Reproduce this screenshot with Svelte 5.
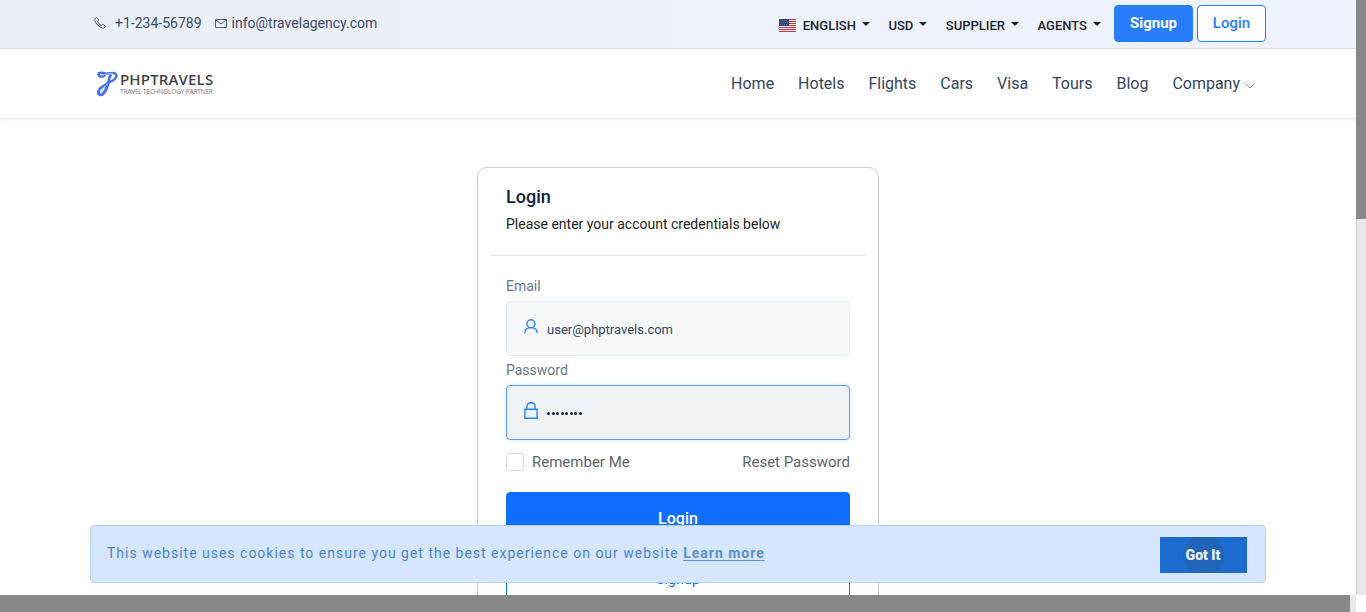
<script lang="ts">
  const menus = ['ENGLISH', 'USD', 'SUPPLIER', 'AGENTS'];
  const links = ['Home', 'Hotels', 'Flights', 'Cars', 'Visa', 'Tours', 'Blog', 'Company'];
  const stripes = [0, 2, 4, 6, 8, 10, 12];
</script>

<div class="window">
  <div class="main">
    <div class="page">
      <header class="topbar">
        <div class="contact">
          <svg class="phone" width="12" height="12" viewBox="0 0 12 12" fill="none" stroke="#4b5b76" stroke-width="1">
            <path d="M2.3.7.8 2.1C.4 3.9 2.2 6.7 3.8 8.2s4.4 3.2 6.1 3l1.4-1.5c.3-.4.2-.7-.2-1L9.2 7.4c-.4-.2-.7-.1-1 .2l-.8.9C5.700 7.700 4.300 6.300 3.500 4.600l.9-.8c.3-.3.4-.6.2-1L3.300.9C3 .5 2.700.4 2.300.7Z" />
          </svg>
          <span>+1-234-56789</span>
          <svg class="mail" width="12" height="9" viewBox="0 0 12 9" fill="none" stroke="#4b5b76">
            <path d="M.5.5h11v8H.5zM1 1l5 4 5-4" />
          </svg>
          <span>info@travelagency.com</span>
        </div>
        <div class="account">
          <svg class="flag" width="17" height="13" viewBox="0 0 17 13">
            <path fill="#e9e6ee" d="M0 0h17v13H0z" />
            {#each stripes as y}
              <rect {y} width="17" height="1" fill="#bf3a4b" />
            {/each}
            <path fill="#344777" d="M0 0h10v7H0z" />
            <path stroke="#8290b3" stroke-width=".6" stroke-dasharray=".8 1.2" d="M1 1.500h8M2 3.500h7M1 5.500h8" />
          </svg>
          {#each menus as menu}
            <span class="menu">{menu}<i></i></span>
          {/each}
          <button class="signup">Signup</button>
          <button class="login">Login</button>
        </div>
      </header>

      <div class="navbar">
        <div class="logo">
          <svg width="21" height="26" viewBox="0 0 21 26" fill="none" stroke="#4770f4" stroke-linecap="round" stroke-linejoin="round">
            <path stroke-width="2.500" d="M7.500 4.800C5 6.300 1.300 5.500 1.500 3.300S5.500 1.800 8.500 2.500s8.500-2 10.500.8C20.500 6.500 17 10 11.500 11.200" />
            <path stroke-width="2.800" d="M13.500 4.500C11.500 7 12.300 9.500 11 13.500S6.500 24.300 3.500 23.800 1 19.500 3.500 17.200 8 14.500 12 11.300" />
            <path stroke="#a3b6fb" stroke-width="1" d="M4.500 4.300c4-.3 6-2.500 11-1.800M3 19.500c2-3 6-3.500 8-7" />
          </svg>
          <div class="wordmark">
            <strong>PHPTRAVELS</strong>
            <small>TRAVEL TECHNOLOGY PARTNER</small>
          </div>
        </div>
        <nav>
          {#each links as link}
            <a href="#top">{link}{#if link === 'Company'}<svg width="10" height="6" viewBox="0 0 10 6" fill="none" stroke="#8b93a2"><path d="m.5.500 4.500 4.500L9.500.5" /></svg>{/if}</a>
          {/each}
        </nav>
      </div>

      <section class="card">
        <div class="heading">
          <h1>Login</h1>
          <p>Please enter your account credentials below</p>
        </div>
        <div class="form">
          <div class="label">Email</div>
          <div class="field">
            <svg width="14" height="15" viewBox="0 0 14 15" fill="none" stroke="#2b7fff" stroke-width="1.400">
              <circle cx="7" cy="4.700" r="4" />
              <path d="M.8 14.300c0-3.600 2.600-5.700 6.200-5.700s6.200 2.100 6.200 5.700" />
            </svg>
            <span class="value">user@phptravels.com</span>
          </div>
          <div class="label second">Password</div>
          <div class="field focused">
            <svg width="14" height="17" viewBox="0 0 14 17" fill="none" stroke="#2b7fff" stroke-width="1.400">
              <path d="M.9 7.200h12.200v9H.9zM3 7V4.600C3 2.300 4.600.8 7 .8s4 1.500 4 3.800V7" />
            </svg>
            <span class="dots">{#each Array(8) as _}<i></i>{/each}</span>
          </div>
          <div class="options">
            <span class="box"></span><span>Remember Me</span><span class="reset">Reset Password</span>
          </div>
          <button class="submit">Login</button>
          <button class="register">Signup</button>
        </div>
      </section>

      <div class="cookies">
        <p>This website uses cookies to ensure you get the best experience on our website <b>Learn more</b></p>
        <button>Got It</button>
      </div>
    </div>
    <div class="vscroll"><div></div></div>
  </div>
  <div class="hscroll"><div></div></div>
</div>

<style>
  :global(body) { margin: 0; background: #fff; }
  * { box-sizing: border-box; }
  .window { width: 1366px; height: 612px; overflow: hidden; display: flex; flex-direction: column; font-family: Roboto, sans-serif; color: #0d233e; }
  .main { height: 595px; display: flex; }
  .page { position: relative; width: 1356px; height: 595px; overflow: hidden; background: #fff; }
  .vscroll { width: 10px; background: #e8e8e8; border-left: 1px solid #c8c8c8; }
  .vscroll div { height: 219px; margin-left: -1px; background: #888; }
  .hscroll { width: 1356px; height: 17px; background: #e8e8e8; }
  .hscroll div { width: 1350px; height: 17px; background: #888; }
  button { font-family: inherit; padding: 0; cursor: pointer; }

  .topbar { height: 49px; display: flex; justify-content: space-between; padding: 0 90px 0 94px; background: linear-gradient(90deg, #eaeef8, #eff3ff); border-bottom: 1px solid #dce2f0; }
  .contact { display: flex; align-items: center; height: 46px; font-size: 14px; color: #3a4a64; }
  .phone { margin-right: 9px; }
  .mail { margin: 0 5px 0 13px; }
  .account { display: flex; align-items: flex-start; padding-top: 5px; }
  .flag { margin: 14px 7px 0 0; }
  .menu { display: flex; align-items: center; height: 40px; margin-right: 18.500px; font-size: 13px; font-weight: 500; color: #212529; white-space: nowrap; }
  .menu i { margin: -3px 0 0 6px; border: 4px solid transparent; border-top-color: #212529; border-bottom: 0; }
  .menu:nth-of-type(4) { margin-right: 13px; }
  .signup, .login { height: 37px; border-radius: 4px; border: 1px solid #287dfa; font-size: 15px; font-weight: 500; padding-bottom: 2px; }
  .signup { width: 79px; margin-right: 4px; background: #287dfa; color: #fff; font-weight: 700; }
  .login { width: 69px; background: #fff; color: #287dfa; }

  .navbar { height: 70px; display: flex; align-items: center; justify-content: space-between; padding: 0 101px 0 97px; border-bottom: 1px solid #ececec; box-shadow: 0 1px 3px rgba(0, 0, 0, 0.06); }
  .logo { display: flex; gap: 2px; }
  .wordmark { display: flex; flex-direction: column; font-family: "Open Sans", sans-serif; }
  .wordmark strong { font-size: 15px; line-height: 17px; font-weight: 600; color: #444; letter-spacing: 0.150px; }
  .wordmark small { font-size: 6.500px; line-height: 8px; color: #777; white-space: nowrap; letter-spacing: -0.170px; }
  nav { display: flex; gap: 24px; font-size: 16px; letter-spacing: -0.010px; }
  nav a { color: #33445f; text-decoration: none; white-space: nowrap; }
  nav svg { margin-left: 5px; }

  .card { width: 402px; height: 480px; margin: 48px auto 0; border: 1px solid #c9cbce; border-radius: 10px; padding: 0 12px; }
  .heading { height: 88px; padding: 17px 16px 0; border-bottom: 1px solid #dee2e6; }
  h1 { margin: 0; font-size: 18px; line-height: 24px; font-weight: 500; }
  p { margin: 0; }
  .heading p { margin-top: 4px; font-size: 14px; line-height: 22px; color: #222; }
  .form { padding: 19px 16px 0; }
  .label { height: 26px; font-size: 14px; line-height: 22px; color: #66778f; }
  .second { height: 26px; margin-top: 3px; }
  .field { height: 55px; display: flex; align-items: center; padding-left: 17px; border: 1px solid #e7ebf0; border-radius: 4px; background: #f7f8fa; font-size: 13px; color: #33445f; }
  .field svg { margin: -4px 9px 0 0; }
  .value { padding-top: 2px; }
  .focused { border-color: #5c9bfa; background: #f0f3f6; box-shadow: 0 0 4px rgba(40, 125, 250, 0.18); }
  .dots { display: flex; gap: 1.500px; padding-top: 2px; }
  .dots i { width: 3px; height: 3px; border-radius: 50%; background: #0d233e; }
  .options { display: flex; align-items: center; height: 18px; margin: 13px 0 21px; font-size: 15px; color: #5d646d; }
  .box { width: 18px; height: 18px; margin-right: 8px; border: 1px solid #d8dade; border-radius: 2px; }
  .reset { margin-left: auto; }
  .submit, .register { display: block; width: 344px; height: 53px; border: 1px solid #0d6efd; border-radius: 4px; }
  .submit { background: #0d6efd; color: #fff; font-size: 16px; font-weight: 500; }
  .register { margin-top: 8px; padding-bottom: 2px; background: #fff; color: #0d6efd; font-size: 14px; letter-spacing: 0.200px; }

  .cookies { position: absolute; left: 90px; top: 525px; width: 1176px; height: 58px; display: flex; align-items: center; justify-content: space-between; padding: 0 18px 0 16px; border: 1px solid #b2d0fc; border-radius: 4px; background: #d6e6ff; font-size: 14px; letter-spacing: 0.995px; color: #4c83cb; }
  .cookies p { margin-top: -3px; }
  .cookies b { color: #5c8fd0; text-decoration: underline; text-underline-offset: 2px; }
  .cookies button { width: 87px; height: 36px; margin-top: 2px; padding-right: 1px; border: 0; background: radial-gradient(circle, #2165ba 0 20px, #1e6bcf 21px); color: #e9f0fb; font-size: 14px; font-weight: 900; }
</style>
